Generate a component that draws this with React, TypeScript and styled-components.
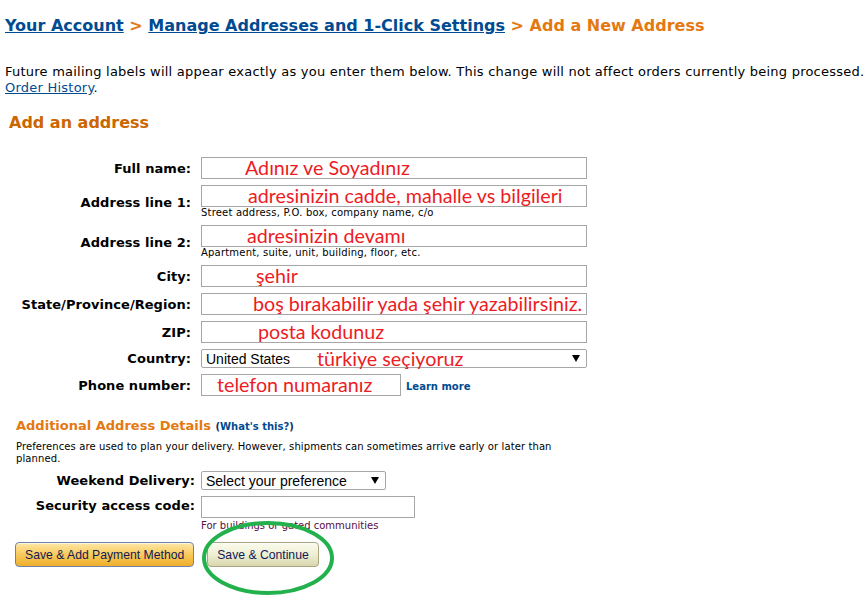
import styled, { createGlobalStyle } from "styled-components";

const GlobalStyle = createGlobalStyle`
  body {
    margin: 0;
    background: #ffffff;
    color: #000000;
    font-family: "DejaVu Sans", Verdana, sans-serif;
  }
`;

const LINK = "#004b91";
const ORANGE = "#e47911";
const NOTE_RED = "#ed1c24";

type Row = {
  label: string;
  note: string;
  indent: number;
  hint?: string;
};

const rows: Row[] = [
  { label: "Full name:", note: "Adınız ve Soyadınız", indent: 43 },
  {
    label: "Address line 1:",
    note: "adresinizin cadde, mahalle vs bilgileri",
    indent: 46,
    hint: "Street address, P.O. box, company name, c/o",
  },
  {
    label: "Address line 2:",
    note: "adresinizin devamı",
    indent: 45,
    hint: "Apartment, suite, unit, building, floor, etc.",
  },
  { label: "City:", note: "şehir", indent: 54 },
  {
    label: "State/Province/Region:",
    note: "boş bırakabilir yada şehir yazabilirsiniz.",
    indent: 51,
  },
  { label: "ZIP:", note: "posta kodunuz", indent: 56 },
];

const Arrow = () => (
  <svg width="8" height="7" viewBox="0 0 8 7">
    <polygon points="0,0 8,0 4,7" fill="#000" />
  </svg>
);

const App = () => {
  return (
    <Page>
      <GlobalStyle />
      <Crumbs>
        <CrumbLink href="#">Your Account</CrumbLink>
        <Sep> &gt; </Sep>
        <CrumbLink href="#">Manage Addresses and 1-Click Settings</CrumbLink>
        <Sep> &gt; Add a New Address</Sep>
      </Crumbs>

      <Intro>
        Future mailing labels will appear exactly as you enter them below. This
        change will not affect orders currently being processed.
        <br />
        <TextLink href="#">Order History</TextLink>.
      </Intro>

      <Heading>Add an address</Heading>

      <Form $label={186} $gap={10} $top={23}>
        {rows.map((r) => (
          <FormRow key={r.label}>
            <Label>{r.label}</Label>
            <Cell>
              <NoteInput
                readOnly
                defaultValue={r.note}
                $indent={r.indent}
                $width={386}
              />
              {r.hint ? <Hint>{r.hint}</Hint> : null}
            </Cell>
          </FormRow>
        ))}
        <FormRow>
          <Label>Country:</Label>
          <Cell>
            <FakeSelect $width={386}>
              <span>United States</span>
              <SelectNote>türkiye seçiyoruz</SelectNote>
              <Arrow />
            </FakeSelect>
          </Cell>
        </FormRow>
        <FormRow>
          <Label>Phone number:</Label>
          <InlineCell>
            <NoteInput
              readOnly
              defaultValue="telefon numaranız"
              $indent={15}
              $width={200}
            />
            <SmallLink href="#">Learn more</SmallLink>
          </InlineCell>
        </FormRow>
      </Form>

      <Extra>
        <ExtraTitle>
          Additional Address Details{" "}
          <WhatsThis>
            (<a href="#">What's this?</a>)
          </WhatsThis>
        </ExtraTitle>
        <Prefs>
          Preferences are used to plan your delivery. However, shipments can
          sometimes arrive early or later than
          <br />
          planned.
        </Prefs>
      </Extra>

      <Form $label={190} $gap={6} $top={6}>
        <FormRow>
          <TopLabel>Weekend Delivery:</TopLabel>
          <Cell>
            <FakeSelect $width={185}>
              <span>Select your preference</span>
              <Spacer />
              <Arrow />
            </FakeSelect>
          </Cell>
        </FormRow>
        <FormRow>
          <TopLabel>Security access code:</TopLabel>
          <Cell>
            <NoteInput readOnly defaultValue="" $indent={4} $width={214} />
            <GateHint>For buildings or gated communities</GateHint>
          </Cell>
        </FormRow>
      </Form>

      <Buttons>
        <Button $variant="primary">Save &amp; Add Payment Method</Button>
        <Circled>
          <Button $variant="secondary">Save &amp; Continue</Button>
          <Ring width="136" height="78" viewBox="0 0 136 78">
            <ellipse
              cx="68"
              cy="39"
              rx="64"
              ry="35"
              fill="none"
              stroke="#22b14c"
              strokeWidth="4"
            />
          </Ring>
        </Circled>
      </Buttons>
    </Page>
  );
};

export default App;

const Page = styled.div`
  width: 868px;
  height: 606px;
  box-sizing: border-box;
  padding: 14px 5px 0 5px;
  overflow: hidden;
`;

const Crumbs = styled.h1`
  margin: 0;
  font-size: 16px;
  line-height: 24px;
  font-weight: bold;
  white-space: pre;
`;

const CrumbLink = styled.a`
  color: ${LINK};
  text-decoration: underline;
`;

const Sep = styled.span`
  color: ${ORANGE};
`;

const Intro = styled.p`
  margin: 26px 0 0 0;
  font-size: 13px;
  line-height: 16px;
  letter-spacing: 0.23px;
  white-space: nowrap;
`;

const TextLink = styled.a`
  color: ${LINK};
  text-decoration: underline;
`;

const Heading = styled.h2`
  margin: 16px 0 0 4px;
  font-size: 16px;
  line-height: 22px;
  font-weight: bold;
  color: #cc6600;
`;

const Form = styled.div<{ $label: number; $gap: number; $top: number }>`
  display: grid;
  grid-template-columns: ${(p) => p.$label}px 1fr;
  column-gap: ${(p) => p.$gap}px;
  row-gap: 6px;
  margin-top: ${(p) => p.$top}px;
`;

const FormRow = styled.div`
  display: contents;
`;

const Label = styled.label`
  align-self: center;
  text-align: right;
  font-size: 13px;
  font-weight: bold;
  letter-spacing: 0.05px;
  white-space: nowrap;
`;

const TopLabel = styled(Label)`
  align-self: start;
  line-height: 19px;
`;

const Cell = styled.div`
  display: flex;
  flex-direction: column;
  align-items: flex-start;
`;

const InlineCell = styled.div`
  display: flex;
  align-items: center;
  gap: 5px;
`;

const NoteInput = styled.input<{ $indent: number; $width: number }>`
  width: ${(p) => p.$width}px;
  height: 22px;
  box-sizing: border-box;
  margin: 0;
  padding: 0 0 2px ${(p) => p.$indent}px;
  border: 1px solid #a6a6a6;
  border-radius: 0;
  background: #fff;
  font-family: Lato, "Open Sans", sans-serif;
  font-size: 19.7px;
  color: ${NOTE_RED};
  outline: none;
`;

const Hint = styled.span`
  font-size: 10px;
  line-height: 12px;
  letter-spacing: 0.2px;
  white-space: nowrap;
`;

const GateHint = styled(Hint)`
  line-height: 15px;
  letter-spacing: 0;
  color: #540d3f;
`;

const FakeSelect = styled.div<{ $width: number }>`
  width: ${(p) => p.$width}px;
  height: 19px;
  box-sizing: border-box;
  display: flex;
  align-items: center;
  padding: 0 6px 0 4px;
  border: 1px solid #a6a6a6;
  border-radius: 2px;
  background: #fff;
  font-family: "Liberation Sans", Arial, sans-serif;
  font-size: 14px;
  color: #000;
  white-space: nowrap;
`;

const SelectNote = styled.span`
  flex: 1;
  margin-left: 27px;
  font-family: Lato, "Open Sans", sans-serif;
  font-size: 19.7px;
  color: ${NOTE_RED};
`;

const Spacer = styled.span`
  flex: 1;
`;

const SmallLink = styled.a`
  margin-top: 2px;
  font-size: 10px;
  font-weight: bold;
  color: ${LINK};
  text-decoration: none;
`;

const Extra = styled.div`
  margin: 21px 0 0 11px;
`;

const ExtraTitle = styled.h3`
  margin: 0;
  font-size: 13px;
  line-height: 18px;
  font-weight: bold;
  color: ${ORANGE};
`;

const WhatsThis = styled.span`
  font-size: 10px;
  color: #1c2a5c;

  a {
    color: ${LINK};
    text-decoration: none;
  }
`;

const Prefs = styled.p`
  margin: 5px 0 0 0;
  font-size: 10px;
  line-height: 12px;
  letter-spacing: 0.1px;
  white-space: nowrap;
`;

const Buttons = styled.div`
  display: flex;
  align-items: center;
  gap: 13px;
  margin: 9px 0 0 10px;
`;

const Button = styled.button<{ $variant: "primary" | "secondary" }>`
  height: 25px;
  box-sizing: border-box;
  padding: 0 ${(p) => (p.$variant === "primary" ? 9 : 9)}px;
  border-radius: 4px;
  border: 1px solid
    ${(p) => (p.$variant === "primary" ? "#6f83aa" : "#a9a57f")};
  background: ${(p) =>
    p.$variant === "primary"
      ? "linear-gradient(#fde7a8 0%, #f9cd62 45%, #f0ae2a 100%)"
      : "linear-gradient(#fbfbee 0%, #efefd4 50%, #d8d7ae 100%)"};
  box-shadow: inset 0 1px 0 rgba(255, 255, 255, 0.6);
  font-family: "Liberation Sans", Arial, sans-serif;
  font-size: 12.2px;
  color: #101a57;
  cursor: pointer;
`;

const Circled = styled.span`
  position: relative;
  display: inline-flex;
`;

const Ring = styled.svg`
  position: absolute;
  left: -7px;
  top: -23px;
  pointer-events: none;
`;
